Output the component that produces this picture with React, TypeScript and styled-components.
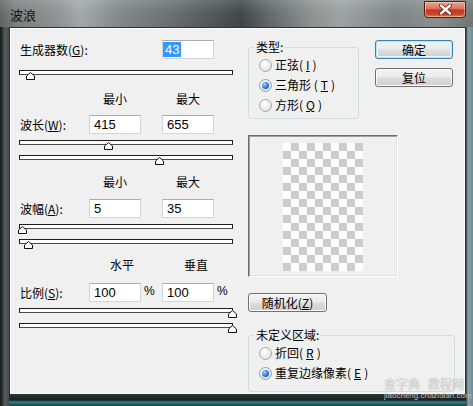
import React from 'react';
import styled, { createGlobalStyle, css } from 'styled-components';

const CJK = `"Noto Sans CJK SC", "Noto Sans", sans-serif`;
const NUM = `"Liberation Sans", Arial, sans-serif`;

const GlobalStyle = createGlobalStyle`
  html, body {
    margin: 0;
    padding: 0;
    background: #ffffff;
  }
  body {
    font-family: ${CJK};
  }
`;

const Window = styled.div`
  position: relative;
  width: 473px;
  height: 406px;
  display: flex;
  flex-direction: column;
  overflow: hidden;
  background:
    linear-gradient(90deg, #121716 0, #2b3332 2px, #565e5d 5px, #434b4a 9px) left top / 9px 100% no-repeat,
    linear-gradient(90deg, #2f3b3e 0, #8aa4ab 2px, #6e8b92 7px) right top / 7px 100% no-repeat,
    linear-gradient(180deg, #2a3233 0, #1a2122 5px, #2f7f8b 7px, #1b3a3f 11px) left bottom / 100% 11px no-repeat,
    #3f4746;
`;

const TitleBar = styled.div`
  height: 27px;
  flex: none;
  display: flex;
  justify-content: space-between;
  align-items: flex-start;
  padding: 0 7px 0 10px;
  box-sizing: border-box;
  background:
    linear-gradient(180deg, rgba(255, 255, 255, 0.16) 0, rgba(255, 255, 255, 0.04) 45%, rgba(0, 0, 0, 0) 100%),
    linear-gradient(90deg, #5b6362 0%, #767d7c 3%, #8b9190 12%, #a1a7a6 17%, #808786 25%, #6b7271 34%, #4d5554 45%, #3b4342 51%, #5f6766 57%, #8b918f 66%, #9ba1a0 72%, #7c8382 84%, #878e8d 92%, #6d7574 100%);
`;

const Title = styled.span`
  font: 13px/15px ${CJK};
  color: #141414;
  margin-top: 7px;
`;

const CloseButton = styled.div`
  width: 42px;
  height: 17px;
  margin-top: 1px;
  box-sizing: border-box;
  display: flex;
  align-items: center;
  justify-content: center;
  border: 1px solid #5a1a10;
  border-radius: 0 0 4px 4px;
  background: linear-gradient(180deg, #e9a897 0%, #db735d 45%, #c23a22 52%, #c4432a 80%, #e08459 100%);
  box-shadow: inset 0 0 0 1px rgba(255, 210, 190, 0.55);
`;

const Client = styled.div`
  flex: 1;
  margin: 0 7px 11px 9px;
  display: flex;
  gap: 15px;
  padding: 12px 0 0 9px;
  box-sizing: border-box;
  overflow: hidden;
  background: #f0f0f0;
  border: 1px solid #2c3536;
  box-shadow: inset 0 0 0 1px #fbfbfb;
`;

const LeftCol = styled.div`
  width: 214px;
  flex: none;
  display: flex;
  flex-direction: column;
`;

const FieldRow = styled.div<{ $mt?: number }>`
  display: grid;
  grid-template-columns: 70px 52px 21px 52px 1fr;
  align-items: center;
  height: 19px;
  margin-top: ${({ $mt }) => $mt ?? 0}px;
`;

const Label = styled.span`
  font: 12px/16px ${CJK};
  color: #000;
  padding-left: 1px;
  white-space: nowrap;
  grid-column: 1;
`;

const Field = styled.div<{ $col: number; $tight?: boolean }>`
  grid-column: ${({ $col }) => $col};
  width: 52px;
  height: 19px;
  box-sizing: border-box;
  border: 1px solid #d2d6da;
  border-top-color: #a9adb2;
  background: #ffffff;
  padding: 1px 0 0 ${({ $tight }) => ($tight ? 0 : 4)}px;
  font: 13px/16px ${NUM};
  color: #000;
`;

const Selected = styled.span`
  display: inline-block;
  background: #3399ff;
  color: #ffffff;
  padding: 0 2px;
  line-height: 15px;
`;

const Percent = styled.span<{ $col: number }>`
  grid-column: ${({ $col }) => $col};
  font: 12px/14px ${NUM};
  color: #000;
  padding-left: 3px;
  align-self: start;
  margin-top: 1px;
`;

const HeaderRow = styled.div<{ $mt: number }>`
  display: grid;
  grid-template-columns: 70px 52px 21px 52px 1fr;
  height: 16px;
  margin-top: ${({ $mt }) => $mt}px;
`;

const ColHead = styled.span<{ $col: number; $shift?: number }>`
  grid-column: ${({ $col }) => $col};
  text-align: center;
  font: 12px/16px ${CJK};
  color: #000;
  padding-left: ${({ $shift }) => $shift ?? 0}px;
  white-space: nowrap;
`;

const SliderWrap = styled.div<{ $mt: number }>`
  position: relative;
  width: 214px;
  height: 5px;
  margin-top: ${({ $mt }) => $mt}px;
`;

const Track = styled.div`
  height: 5px;
  box-sizing: border-box;
  border: 1px solid #1c1c1c;
  border-bottom-color: #4a4a4a;
  background: #ffffff;
`;

const Thumb = styled.svg`
  position: absolute;
  top: 2px;
  width: 9px;
  height: 8px;
  overflow: visible;
`;

const RightCol = styled.div`
  display: flex;
  flex-direction: column;
  align-items: flex-start;
`;

const TopRow = styled.div`
  display: flex;
  gap: 16px;
  align-items: flex-start;
`;

const Group = styled.fieldset<{ $w: number; $pb: number }>`
  width: ${({ $w }) => $w}px;
  box-sizing: border-box;
  margin: 0;
  padding: 1px 6px ${({ $pb }) => $pb}px 10px;
  border: 1px solid #d5dbe0;
  border-radius: 3px;
  min-width: 0;
`;

const Legend = styled.legend`
  font: 12px/14px ${CJK};
  color: #000;
  padding: 0 2px;
  margin-left: -5px;
`;

const RadioRow = styled.div`
  display: flex;
  align-items: center;
  gap: 3px;
  height: 20px;
  font: 12px/16px ${CJK};
  color: #000;
  white-space: nowrap;
`;

const RadioDot = styled.span<{ $checked?: boolean }>`
  position: relative;
  flex: none;
  width: 13px;
  height: 13px;
  box-sizing: border-box;
  border-radius: 50%;
  border: 1px solid #a7a7a7;
  background: radial-gradient(circle at 40% 35%, #ffffff 0, #ececec 55%, #d3d3d3 100%);
  ${({ $checked }) =>
    $checked &&
    css`
      border-color: #8aa0b8;
      &::after {
        content: '';
        position: absolute;
        left: 2px;
        top: 2px;
        width: 7px;
        height: 7px;
        border-radius: 50%;
        background: radial-gradient(circle at 35% 35%, #9ad6ff 0, #2a74c9 55%, #143f78 100%);
      }
    `}
`;

const ButtonCol = styled.div`
  display: flex;
  flex-direction: column;
  gap: 9px;
`;

const PushButton = styled.button<{ $w: number; $primary?: boolean }>`
  width: ${({ $w }) => $w}px;
  height: 19px;
  padding: 0;
  box-sizing: border-box;
  font: 12px/15px ${CJK};
  color: #000;
  border: 1px solid #707070;
  border-radius: 3px;
  background: linear-gradient(180deg, #f3f3f3 0%, #ebebeb 48%, #dddddd 52%, #cfcfcf 100%);
  box-shadow: inset 0 0 0 1px #fbfbfb;
  ${({ $primary }) =>
    $primary &&
    css`
      border-color: #3c7fb1;
      box-shadow: inset 0 0 0 1px #b6e4fb, inset 0 0 0 2px #e5f5fd;
    `}
`;

const Preview = styled.div`
  width: 150px;
  height: 142px;
  margin-top: 16px;
  box-sizing: border-box;
  display: flex;
  align-items: center;
  justify-content: center;
  border: 1px solid;
  border-color: #6a6a6a #ffffff #ffffff #6a6a6a;
  box-shadow: inset 1px 1px 0 #a0a0a0, inset -1px -1px 0 #e3e3e3;
  background: #f0f0f0;
`;

const Checker = styled.div`
  width: 80px;
  height: 128px;
  margin-top: 2px;
  background: repeating-conic-gradient(#cccccc 0 25%, #ffffff 0 50%) 0 0 / 16px 16px;
`;

const Spacer = styled.div<{ $h: number }>`
  height: ${({ $h }) => $h}px;
  flex: none;
`;

const Watermark = styled.div`
  position: absolute;
  left: 384px;
  top: 377px;
  width: 88px;
  display: flex;
  flex-direction: column;
  gap: 1px;
  pointer-events: none;
  color: rgba(255, 255, 255, 0.6);
  text-shadow: 0 0 1px rgba(90, 90, 90, 0.6);
`;

const MarkLine = styled.div`
  display: flex;
  gap: 8px;
  font: 12px/14px ${CJK};
`;

const MarkSub = styled.div`
  font: 8px/8px ${NUM};
  white-space: nowrap;
`;

interface SliderProps {
  mt: number;
  value: number;
  max: number;
}

const Slider: React.FC<SliderProps> = ({ mt, value, max }) => {
  const center = 2 + (value / max) * 211;
  return (
    <SliderWrap $mt={mt}>
      <Track />
      <Thumb viewBox="0 0 9 8" style={{ left: center - 4.5 }}>
        <polygon points="0.5,4 4.5,0.5 8.5,4 8.5,7.5 0.5,7.5" fill="#ffffff" stroke="#111111" strokeWidth="1" />
      </Thumb>
    </SliderWrap>
  );
};

export default function App() {
  return (
    <>
      <GlobalStyle />
      <Window>
        <TitleBar>
          <Title>波浪</Title>
          <CloseButton>
            <svg width="13" height="11" viewBox="0 0 13 11">
              <path d="M2 1.5 L11 9.5 M11 1.5 L2 9.5" stroke="#5a1a10" strokeWidth="4" strokeLinecap="round" />
              <path d="M2 1.5 L11 9.5 M11 1.5 L2 9.5" stroke="#ffffff" strokeWidth="2.4" strokeLinecap="round" />
            </svg>
          </CloseButton>
        </TitleBar>
        <Client>
          <LeftCol>
            <FieldRow>
              <Label>
                生成器数(<u>G</u>):
              </Label>
              <Field $col={4} $tight>
                <Selected>43</Selected>
              </Field>
            </FieldRow>
            <Slider mt={11} value={43} max={999} />

            <HeaderRow $mt={16}>
              <ColHead $col={2}>最小</ColHead>
              <ColHead $col={4}>最大</ColHead>
            </HeaderRow>
            <FieldRow $mt={8}>
              <Label>
                波长(<u>W</u>):
              </Label>
              <Field $col={2}>415</Field>
              <Field $col={4}>655</Field>
            </FieldRow>
            <Slider mt={6} value={415} max={999} />
            <Slider mt={10} value={655} max={999} />

            <HeaderRow $mt={14}>
              <ColHead $col={2}>最小</ColHead>
              <ColHead $col={4}>最大</ColHead>
            </HeaderRow>
            <FieldRow $mt={9}>
              <Label>
                波幅(<u>A</u>):
              </Label>
              <Field $col={2}>5</Field>
              <Field $col={4}>35</Field>
            </FieldRow>
            <Slider mt={6} value={5} max={999} />
            <Slider mt={10} value={35} max={999} />

            <HeaderRow $mt={13}>
              <ColHead $col={2} $shift={14}>
                水平
              </ColHead>
              <ColHead $col={4} $shift={16}>
                垂直
              </ColHead>
            </HeaderRow>
            <FieldRow $mt={10}>
              <Label>
                比例(<u>S</u>):
              </Label>
              <Field $col={2}>100</Field>
              <Percent $col={3}>%</Percent>
              <Field $col={4}>100</Field>
              <Percent $col={5}>%</Percent>
            </FieldRow>
            <Slider mt={6} value={100} max={100} />
            <Slider mt={10} value={100} max={100} />
          </LeftCol>

          <RightCol>
            <TopRow>
              <Group $w={111} $pb={3}>
                <Legend>类型:</Legend>
                <RadioRow>
                  <RadioDot />
                  正弦(<u>I</u>)
                </RadioRow>
                <RadioRow>
                  <RadioDot $checked />
                  三角形 (<u>T</u>)
                </RadioRow>
                <RadioRow>
                  <RadioDot />
                  方形(<u>Q</u>)
                </RadioRow>
              </Group>
              <ButtonCol>
                <PushButton $w={78} $primary>
                  确定
                </PushButton>
                <PushButton $w={78}>复位</PushButton>
              </ButtonCol>
            </TopRow>

            <Preview>
              <Checker />
            </Preview>

            <Spacer $h={16} />
            <PushButton $w={79}>
              随机化(<u>Z</u>)
            </PushButton>

            <Spacer $h={16} />
            <Group $w={207} $pb={8}>
              <Legend>未定义区域:</Legend>
              <RadioRow>
                <RadioDot />
                折回(<u>R</u>)
              </RadioRow>
              <RadioRow>
                <RadioDot $checked />
                重复边缘像素(<u>E</u>)
              </RadioRow>
            </Group>
          </RightCol>
        </Client>
        <Watermark>
          <MarkLine>
            <span>查字典</span>
            <span>教程网</span>
          </MarkLine>
          <MarkSub>jiaocheng.chazidian.com</MarkSub>
        </Watermark>
      </Window>
    </>
  );
}
